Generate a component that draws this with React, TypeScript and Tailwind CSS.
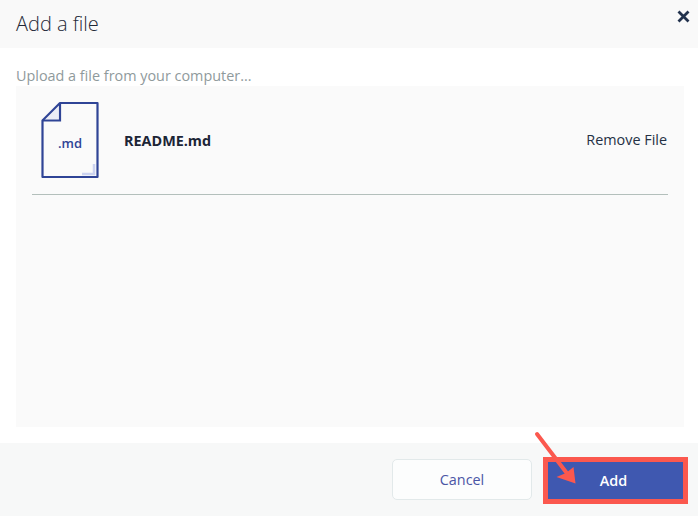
import React from "react";

function FileIcon() {
  return (
    <div className="relative w-[58px] h-[78px] shrink-0">
      <svg width="58" height="78" viewBox="0 0 58 78" fill="none" className="block">
        <path d="M19 2 H56.5 V76 H1.5 V19.5 Z" stroke="#2f4496" strokeWidth="2.2" strokeLinejoin="round" fill="none" />
        <path d="M19 2 V19.5 H1.5" stroke="#2f4496" strokeWidth="2.2" fill="none" />
        <path d="M17.5 5 V18 H4.5 Z" fill="#d5daf0" opacity="0.4" />
        <path d="M53 63 V73 H41" stroke="#ccd3f0" strokeWidth="2.5" fill="none" />
      </svg>
      <span className="absolute left-[17px] top-[33px] text-[13px] leading-[18px] font-semibold text-[#2f4496]">.md</span>
    </div>
  );
}

export default function App() {
  return (
    <div
      className="relative w-[698px] h-[516px] flex flex-col bg-white overflow-hidden"
      style={{ fontFamily: '"Open Sans", sans-serif' }}
    >
      <header className="h-[48px] shrink-0 bg-[#f9f9f9] flex items-start justify-between pl-4 pr-[8px]">
        <h1 className="text-[20px] leading-[48px] font-light text-[#1f2937]">Add a file</h1>
        <svg width="13" height="13" viewBox="0 0 13 13" className="mt-[10px]">
          <path d="M1.5 1.5 L11.5 11.5 M11.5 1.5 L1.5 11.5" stroke="#22324d" strokeWidth="2.8" />
        </svg>
      </header>

      <main className="h-[395px] shrink-0 pl-4 pr-[14px] flex flex-col">
        <p className="h-[38px] shrink-0 pt-[19px] text-[14.4px] leading-[18px] text-[#8f9a9c]">
          Upload a file from your computer...
        </p>
        <section className="h-[341px] bg-[#fafafa] px-4">
          <div className="h-[109px] border-b border-[#b3bfbb] flex items-start">
            <div className="pl-[9px] pt-[15px]">
              <FileIcon />
            </div>
            <span className="ml-[25px] mt-[45px] text-[14.4px] leading-[20px] font-bold text-[#1c2536]">README.md</span>
            <span className="ml-auto mr-px mt-[44px] text-[14.4px] leading-[20px] text-[#243044]">Remove File</span>
          </div>
        </section>
      </main>

      <footer className="flex-1 bg-[#f7f8f8] flex items-start pl-[392px] pt-[14px]">
        <button className="mt-[2px] w-[140px] h-[41px] rounded-[5px] border border-[#e2e9ea] bg-[#fcfdfd] text-[14.4px] text-[#4a55a5]">
          Cancel
        </button>
        <button className="ml-[11px] w-[145px] h-[47px] border-[5px] border-[#fb584e] bg-[#3f58b0] pr-1 text-[14.4px] font-semibold text-white">
          Add
        </button>
      </footer>

      <svg width="60" height="70" viewBox="0 0 60 70" className="absolute left-[530px] top-[426px] pointer-events-none">
        <path d="M7 8 L39 50" stroke="#fb584e" strokeWidth="4" strokeLinecap="round" />
        <path d="M45.5 57.5 L26.5 51 L36 47 L43.5 41 Z" fill="#fb584e" />
      </svg>
    </div>
  );
}
